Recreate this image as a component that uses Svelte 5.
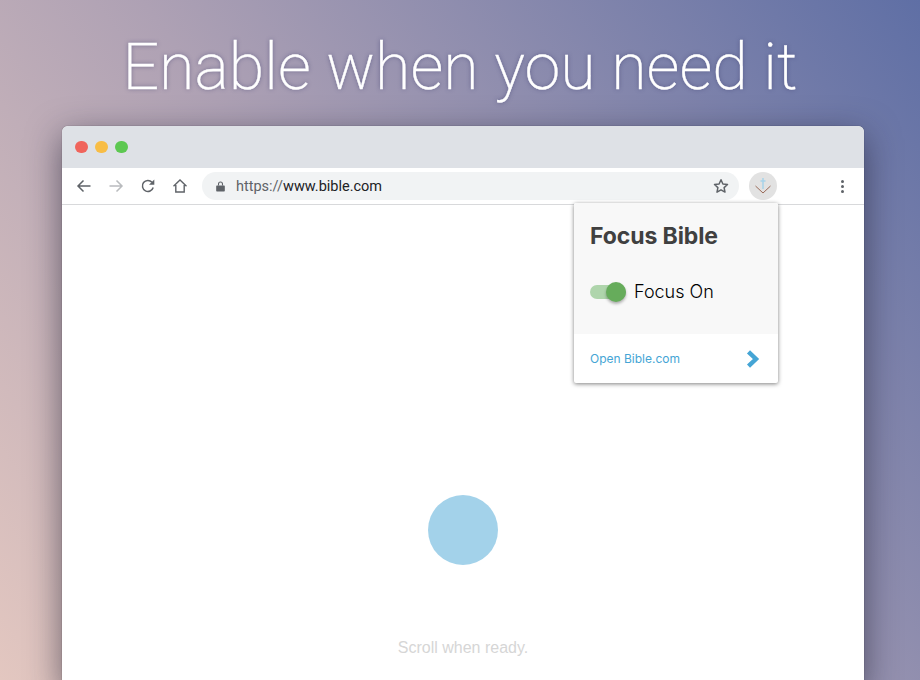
<script lang="ts">
	const dots = ['#f0645c', '#f8bd45', '#5dc851'];
</script>

<div class="page">
	<h1>Enable when you need it</h1>

	<div class="window">
		<div class="titlebar">
			{#each dots as color (color)}
				<span class="dot" style:background={color}></span>
			{/each}
		</div>

		<div class="toolbar">
			<div class="nav">
				<svg viewBox="0 0 16 16" width="16" height="16"><path d="M14.500 8H2M7.500 2.500 2 8l5.500 5.500" fill="none" stroke="#5f6368" stroke-width="1.500"/></svg>
				<svg viewBox="0 0 16 16" width="16" height="16"><path d="M1.500 8H14M8.500 2.500 14 8l-5.500 5.500" fill="none" stroke="#b9bbbe" stroke-width="1.500"/></svg>
				<svg viewBox="0 0 16 16" width="16" height="16"><path d="M13.200 9.500A5.500 5.500 0 1 1 12 4.200" fill="none" stroke="#5f6368" stroke-width="1.500"/><path d="M14.300 1.500v5.300H9z" fill="#5f6368"/></svg>
				<svg viewBox="0 0 16 16" width="16" height="16"><path d="M1.500 8.200 8 2l6.500 6.200M3.800 7v7h8.400V7" fill="none" stroke="#5f6368" stroke-width="1.400"/></svg>
			</div>

			<div class="address">
				<svg class="lock" viewBox="0 0 10 12" width="9" height="11"><path d="M1 5h8a.8.800 0 0 1 .8.800v5a.8.800 0 0 1-.8.800H1a.8.800 0 0 1-.8-.8v-5A.8.800 0 0 1 1 5z" fill="#5f6368"/><path d="M2.800 5V3.200a2.200 2.200 0 0 1 4.400 0V5" fill="none" stroke="#5f6368" stroke-width="1.200"/></svg>
				<span class="url"><span class="scheme">https://</span>www.bible.com</span>
				<svg class="star" viewBox="0 0 16 16" width="16" height="16"><path d="m8 1.800 1.900 4.200 4.600.5-3.400 3.100.9 4.500L8 11.800l-4 2.300.9-4.500L1.500 6.500l4.600-.5z" fill="none" stroke="#5f6368" stroke-width="1.500" stroke-linejoin="round"/></svg>
			</div>

			<button class="ext" type="button" aria-label="Focus Bible">
				<svg viewBox="0 0 28 28" width="28" height="28">
					<path d="M14 6v11M11.500 9h5" fill="none" stroke="#a6d3ea" stroke-width="1.500"/>
					<path d="M6.500 14 14 21l7.500-7" fill="none" stroke="#9a6a58" stroke-width="1"/>
				</svg>
			</button>

			<div class="menu"><span></span><span></span><span></span></div>
		</div>

		<div class="content">
			<div class="circle"></div>
			<p class="hint">Scroll when ready.</p>

			<div class="popup">
				<div class="popup-top">
					<h2>Focus Bible</h2>
					<div class="toggle-row">
						<span class="switch"><span class="knob"></span></span>
						<span class="toggle-label">Focus On</span>
					</div>
				</div>
				<div class="popup-foot">
					<span class="link">Open Bible.com</span>
					<svg viewBox="0 0 14 18" width="14" height="18"><path d="M2.500 1.800 10 9l-7.500 7.200" fill="none" stroke="#45a5d5" stroke-width="4.400"/></svg>
				</div>
			</div>
		</div>
	</div>
</div>

<style>
	:global(body) {
		margin: 0;
	}

	.page {
		width: 920px;
		height: 680px;
		overflow: hidden;
		box-sizing: border-box;
		padding-top: 27px;
		background: linear-gradient(54deg, #e3c7c0 0%, #aea1b4 45%, #5f6fa5 100%);
		font-family: 'Liberation Sans', Arial, sans-serif;
	}

	h1 {
		margin: 0 0 19px;
		height: 80px;
		line-height: 80px;
		text-align: center;
		font-family: Roboto, sans-serif;
		font-weight: 200;
		font-size: 64.5px;
		color: #fff;
		-webkit-text-stroke: 0.35px #fff;
		white-space: nowrap;
		text-shadow: 0 0 4px rgba(60, 60, 110, 0.6);
	}

	.window {
		width: 802px;
		height: 560px;
		margin-left: 62px;
		background: #fff;
		border-radius: 6px 6px 0 0;
		box-shadow: 0 0 1px rgba(0, 0, 0, 0.6), 0 10px 34px rgba(30, 30, 50, 0.6);
	}

	.titlebar {
		height: 42px;
		box-sizing: border-box;
		padding-left: 13px;
		display: flex;
		align-items: center;
		gap: 7.5px;
		background: #dee1e6;
		border-radius: 6px 6px 0 0;
	}

	.dot {
		width: 12.5px;
		height: 12.5px;
		border-radius: 50%;
	}

	.toolbar {
		height: 37px;
		display: flex;
		align-items: center;
		box-sizing: border-box;
		border-bottom: 1px solid #d8d9db;
		padding-left: 14px;
	}

	.nav {
		display: flex;
		gap: 16px;
		width: 126px;
	}

	.nav svg {
		display: block;
	}

	.address {
		width: 537px;
		height: 28px;
		box-sizing: border-box;
		padding: 0 10px 0 14px;
		display: flex;
		align-items: center;
		background: #f1f3f4;
		border-radius: 14px;
	}

	.url {
		margin-left: 11px;
		flex: 1;
		font-family: Roboto, sans-serif;
		font-size: 14.5px;
		color: #202124;
	}

	.scheme {
		color: #5f6368;
	}

	.ext {
		margin-left: 10px;
		width: 28px;
		height: 28px;
		padding: 0;
		border: none;
		border-radius: 50%;
		background: #e2e2e2;
	}

	.ext svg {
		display: block;
	}

	.menu {
		margin-left: 64px;
		display: flex;
		flex-direction: column;
		gap: 2px;
	}

	.menu span {
		width: 3px;
		height: 3px;
		border-radius: 50%;
		background: #5f6368;
	}

	.content {
		position: relative;
		display: flex;
		flex-direction: column;
		align-items: center;
		padding-top: 290px;
	}

	.circle {
		width: 70px;
		height: 70px;
		border-radius: 50%;
		background: #a3d2ea;
	}

	.hint {
		margin: 74px 0 0;
		font-size: 16px;
		color: #d6d6d6;
	}

	.popup {
		position: absolute;
		top: -2px;
		left: 512px;
		width: 204px;
		background: #fff;
		border-radius: 2px;
		box-shadow: 0 1px 4px rgba(0, 0, 0, 0.5);
		font-family: Inter, sans-serif;
	}

	.popup-top {
		height: 131px;
		box-sizing: border-box;
		padding: 19px 16px 0;
		background: #f8f8f8;
		border-radius: 2px 2px 0 0;
	}

	h2 {
		margin: 0;
		font-size: 23px;
		line-height: 28px;
		font-weight: 700;
		color: #404040;
		letter-spacing: -0.1px;
	}

	.toggle-row {
		margin-top: 31px;
		display: flex;
		align-items: center;
		gap: 8px;
	}

	.switch {
		position: relative;
		width: 36px;
		height: 14px;
		border-radius: 7px;
		background: #afd5ac;
	}

	.knob {
		position: absolute;
		right: 0;
		top: -3px;
		width: 20px;
		height: 20px;
		border-radius: 50%;
		background: #66ac5b;
		box-shadow: 0 2px 3px rgba(0, 0, 0, 0.3);
	}

	.toggle-label {
		font-size: 18px;
		font-weight: 300;
		color: #000;
	}

	.popup-foot {
		height: 49px;
		box-sizing: border-box;
		padding: 0 18px 0 16px;
		display: flex;
		align-items: center;
		justify-content: space-between;
	}

	.link {
		font-size: 12px;
		color: #45a5d5;
	}
</style>
